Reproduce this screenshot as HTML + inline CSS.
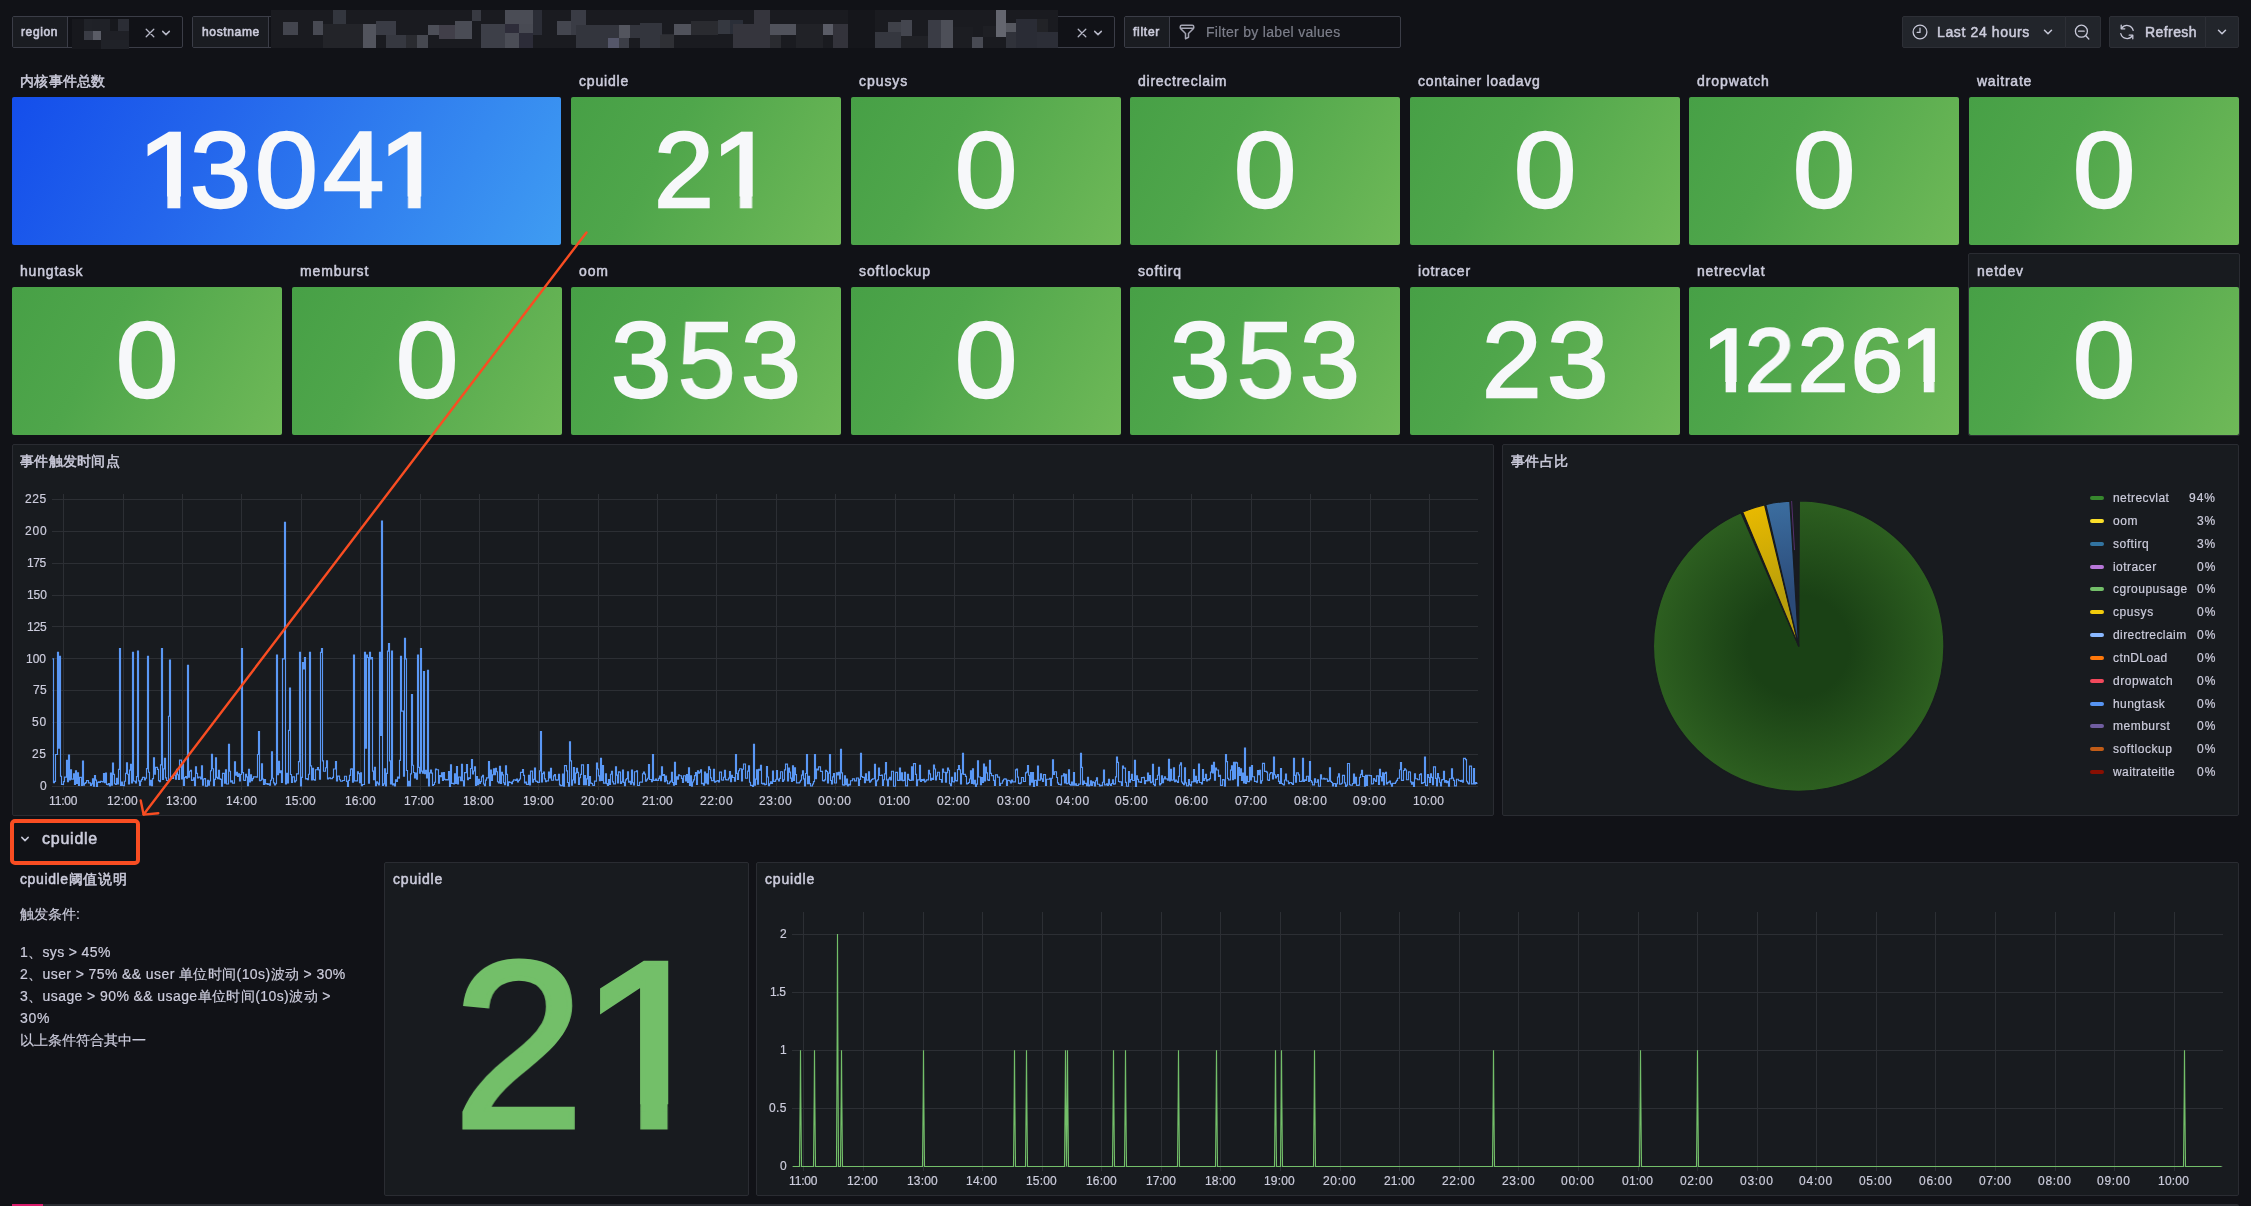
<!DOCTYPE html>
<html><head><meta charset="utf-8"><title>dashboard</title>
<style>
html,body{margin:0;padding:0;}
body{width:2251px;height:1206px;overflow:hidden;background:#111217;position:relative;font-family:"Liberation Sans",sans-serif;}
.t{position:absolute;white-space:nowrap;font-family:"Liberation Sans",sans-serif;will-change:transform;}
.a{position:absolute;}
</style></head><body>
<div style="position:absolute;left:12px;top:16px;width:171px;height:32px;box-sizing:border-box;border:1px solid #3b3d47;border-radius:2px;background:#111217;"></div>
<div style="position:absolute;left:13px;top:17px;width:54px;height:30px;background:#1a1c21;border-right:1px solid #3b3d47;border-radius:1px 0 0 1px;"></div>
<div class="t" style="font-size:12px;line-height:18px;top:22.80px;color:#ccccdc;letter-spacing:0.626px;left:21.00px;-webkit-text-stroke:0.6px #ccccdc;">region</div>
<div style="position:absolute;left:192px;top:16px;width:923px;height:32px;box-sizing:border-box;border:1px solid #3b3d47;border-radius:2px;background:#111217;"></div>
<div style="position:absolute;left:193px;top:17px;width:75px;height:30px;background:#1a1c21;border-right:1px solid #3b3d47;border-radius:1px 0 0 1px;"></div>
<div class="t" style="font-size:12px;line-height:18px;top:22.80px;color:#ccccdc;letter-spacing:0.649px;left:201.50px;-webkit-text-stroke:0.6px #ccccdc;">hostname</div>
<div style="position:absolute;left:1124px;top:16px;width:277px;height:32px;box-sizing:border-box;border:1px solid #3b3d47;border-radius:2px;background:#111217;"></div>
<div style="position:absolute;left:1125px;top:17px;width:44px;height:30px;background:#1a1c21;border-right:1px solid #3b3d47;border-radius:1px 0 0 1px;"></div>
<div class="t" style="font-size:12px;line-height:18px;top:22.80px;color:#ccccdc;letter-spacing:0.721px;left:1133.00px;-webkit-text-stroke:0.6px #ccccdc;">filter</div>
<svg class="a" style="left:144px;top:27px" width="12" height="12" viewBox="0 0 12 12"><path d="M2.2 2.2L9.8 9.8M9.8 2.2L2.2 9.8" stroke="#b6b7c6" stroke-width="1.3" fill="none" stroke-linecap="round"/></svg>
<svg class="a" style="left:160px;top:27.200000000000003px" width="12" height="12" viewBox="0 0 12 12"><path d="M2.7 4.35L6 7.65L9.3 4.35" stroke="#b6b7c6" stroke-width="1.5" fill="none" stroke-linecap="round" stroke-linejoin="round"/></svg>
<svg class="a" style="left:1076px;top:27px" width="12" height="12" viewBox="0 0 12 12"><path d="M2.2 2.2L9.8 9.8M9.8 2.2L2.2 9.8" stroke="#b6b7c6" stroke-width="1.3" fill="none" stroke-linecap="round"/></svg>
<svg class="a" style="left:1092px;top:27.200000000000003px" width="12" height="12" viewBox="0 0 12 12"><path d="M2.7 4.35L6 7.65L9.3 4.35" stroke="#b6b7c6" stroke-width="1.5" fill="none" stroke-linecap="round" stroke-linejoin="round"/></svg>
<div style="position:absolute;left:72px;top:19px;width:57px;height:30px;background:#17181d;"></div>
<div style="position:absolute;left:84px;top:19px;width:8px;height:12px;background:#202228;"></div>
<div style="position:absolute;left:92px;top:19px;width:18px;height:12px;background:#1f2127;"></div>
<div style="position:absolute;left:118px;top:19px;width:11px;height:13px;background:#2b2d35;"></div>
<div style="position:absolute;left:84px;top:31px;width:9px;height:9px;background:#3a3c45;"></div>
<div style="position:absolute;left:93px;top:31px;width:8px;height:9px;background:#5a5c66;"></div>
<div style="position:absolute;left:101px;top:31px;width:28px;height:9px;background:#1f2026;"></div>
<div style="position:absolute;left:101px;top:40px;width:28px;height:9px;background:#202228;"></div>
<div style="position:absolute;left:271px;top:10px;width:787px;height:38px;background:#1a1b20;"></div>
<div style="position:absolute;left:848px;top:10px;width:27px;height:38px;background:#15161b;"></div>
<div style="position:absolute;left:283px;top:22px;width:15px;height:13px;background:#43454e;"></div>
<div style="position:absolute;left:313px;top:21px;width:10px;height:14px;background:#484a53;"></div>
<div style="position:absolute;left:333px;top:10px;width:13px;height:14px;background:#33363e;"></div>
<div style="position:absolute;left:323px;top:24px;width:40px;height:24px;background:#232429;"></div>
<div style="position:absolute;left:363px;top:24px;width:13px;height:24px;background:#52545d;"></div>
<div style="position:absolute;left:376px;top:21px;width:20px;height:14px;background:#3a3c45;"></div>
<div style="position:absolute;left:386px;top:35px;width:20px;height:13px;background:#363840;"></div>
<div style="position:absolute;left:406px;top:35px;width:11px;height:13px;background:#2a2b30;"></div>
<div style="position:absolute;left:417px;top:35px;width:11px;height:13px;background:#464850;"></div>
<div style="position:absolute;left:428px;top:25px;width:11px;height:10px;background:#4d4f58;"></div>
<div style="position:absolute;left:439px;top:25px;width:16px;height:14px;background:#413f49;"></div>
<div style="position:absolute;left:455px;top:21px;width:17px;height:18px;background:#4a4c55;"></div>
<div style="position:absolute;left:472px;top:10px;width:9px;height:11px;background:#383a42;"></div>
<div style="position:absolute;left:481px;top:24px;width:24px;height:24px;background:#3d3f48;"></div>
<div style="position:absolute;left:505px;top:10px;width:28px;height:14px;background:#4a4c55;"></div>
<div style="position:absolute;left:505px;top:24px;width:14px;height:9px;background:#2e2d3a;"></div>
<div style="position:absolute;left:519px;top:24px;width:14px;height:9px;background:#484a53;"></div>
<div style="position:absolute;left:505px;top:33px;width:14px;height:15px;background:#4b4d56;"></div>
<div style="position:absolute;left:519px;top:33px;width:14px;height:15px;background:#2c2c38;"></div>
<div style="position:absolute;left:533px;top:10px;width:9px;height:25px;background:#2b2d36;"></div>
<div style="position:absolute;left:557px;top:21px;width:14px;height:14px;background:#44464f;"></div>
<div style="position:absolute;left:571px;top:10px;width:15px;height:25px;background:#3a3c45;"></div>
<div style="position:absolute;left:576px;top:25px;width:43px;height:23px;background:#33353d;"></div>
<div style="position:absolute;left:619px;top:25px;width:11px;height:13px;background:#53555e;"></div>
<div style="position:absolute;left:608px;top:38px;width:11px;height:10px;background:#55576a;"></div>
<div style="position:absolute;left:619px;top:38px;width:10px;height:10px;background:#3c3e47;"></div>
<div style="position:absolute;left:630px;top:25px;width:10px;height:13px;background:#33353d;"></div>
<div style="position:absolute;left:640px;top:23px;width:22px;height:25px;background:#33353d;"></div>
<div style="position:absolute;left:662px;top:34px;width:12px;height:14px;background:#2a2b30;"></div>
<div style="position:absolute;left:674px;top:24px;width:6px;height:11px;background:#4a4c55;"></div>
<div style="position:absolute;left:660px;top:35px;width:14px;height:13px;background:#2f3035;"></div>
<div style="position:absolute;left:674px;top:24px;width:17px;height:11px;background:#50525b;"></div>
<div style="position:absolute;left:691px;top:21px;width:27px;height:14px;background:#2a2b30;"></div>
<div style="position:absolute;left:718px;top:20px;width:12px;height:14px;background:#353840;"></div>
<div style="position:absolute;left:730px;top:20px;width:13px;height:14px;background:#2a2e38;"></div>
<div style="position:absolute;left:733px;top:24px;width:21px;height:24px;background:#35353d;"></div>
<div style="position:absolute;left:754px;top:10px;width:16px;height:38px;background:#35353d;"></div>
<div style="position:absolute;left:770px;top:24px;width:26px;height:11px;background:#50525b;"></div>
<div style="position:absolute;left:770px;top:35px;width:11px;height:13px;background:#2a2b30;"></div>
<div style="position:absolute;left:796px;top:24px;width:27px;height:24px;background:#212227;"></div>
<div style="position:absolute;left:823px;top:24px;width:10px;height:11px;background:#5a5c66;"></div>
<div style="position:absolute;left:833px;top:24px;width:15px;height:24px;background:#33333b;"></div>
<div style="position:absolute;left:875px;top:32px;width:26px;height:16px;background:#35373f;"></div>
<div style="position:absolute;left:888px;top:22px;width:13px;height:10px;background:#3f4149;"></div>
<div style="position:absolute;left:901px;top:20px;width:11px;height:16px;background:#44464f;"></div>
<div style="position:absolute;left:901px;top:36px;width:27px;height:12px;background:#202126;"></div>
<div style="position:absolute;left:928px;top:20px;width:13px;height:28px;background:#3a3c45;"></div>
<div style="position:absolute;left:941px;top:20px;width:12px;height:28px;background:#4d4f58;"></div>
<div style="position:absolute;left:953px;top:27px;width:20px;height:21px;background:#1c1d22;"></div>
<div style="position:absolute;left:972px;top:37px;width:11px;height:11px;background:#484a53;"></div>
<div style="position:absolute;left:983px;top:26px;width:13px;height:11px;background:#1e1f24;"></div>
<div style="position:absolute;left:996px;top:10px;width:10px;height:27px;background:#64666f;"></div>
<div style="position:absolute;left:1006px;top:23px;width:10px;height:9px;background:#55575f;"></div>
<div style="position:absolute;left:1006px;top:32px;width:10px;height:16px;background:#30323a;"></div>
<div style="position:absolute;left:1016px;top:19px;width:21px;height:29px;background:#2a2c35;"></div>
<div style="position:absolute;left:1037px;top:19px;width:11px;height:13px;background:#222327;"></div>
<div style="position:absolute;left:1037px;top:32px;width:21px;height:16px;background:#2c2e37;"></div>
<svg class="a" style="left:1177.9px;top:22.6px" width="18" height="18" viewBox="0 0 24 24"><path fill="#a3a4b2" d="M19,2H5A3,3,0,0,0,2,5V6.17a3,3,0,0,0,.25,1.2l0,.06a2.81,2.81,0,0,0,.59.86L9,14.41V21a1,1,0,0,0,.47.85A1,1,0,0,0,10,22a1,1,0,0,0,.45-.11l4-2A1,1,0,0,0,15,19V14.41l6.12-6.12a2.81,2.81,0,0,0,.59-.86l0-.06A3,3,0,0,0,22,6.17V5A3,3,0,0,0,19,2ZM13.290,13.290A1,1,0,0,0,13,14v4.380l-2,1V14a1,1,0,0,0-.29-.71L5.410,8H18.590ZM20,6H4V5A1,1,0,0,1,5,4H19a1,1,0,0,1,1,1Z"/></svg>
<div class="t" style="font-size:14px;line-height:21px;top:21.50px;color:#7d7f8b;letter-spacing:0.313px;left:1206.00px;-webkit-text-stroke:0.2px #7d7f8b;">Filter by label values</div>
<div style="position:absolute;left:1902px;top:16px;width:164px;height:32px;box-sizing:border-box;background:#22252b;border:1px solid #2d2f36;border-radius:2px 0 0 2px;"></div>
<div style="position:absolute;left:2065px;top:16px;width:36px;height:32px;box-sizing:border-box;background:#22252b;border:1px solid #2d2f36;border-radius:0 2px 2px 0;"></div>
<div style="position:absolute;left:2109px;top:16px;width:97px;height:32px;box-sizing:border-box;background:#22252b;border:1px solid #2d2f36;border-radius:2px 0 0 2px;"></div>
<div style="position:absolute;left:2205px;top:16px;width:34px;height:32px;box-sizing:border-box;background:#22252b;border:1px solid #2d2f36;border-radius:0 2px 2px 0;"></div>
<svg class="a" style="left:1911px;top:23px" width="18" height="18" viewBox="0 0 18 18"><circle cx="9" cy="9" r="6.9" stroke="#c7c8d8" stroke-width="1.3" fill="none"/><path d="M9 5.2V9.4H6.2" stroke="#c7c8d8" stroke-width="1.3" fill="none" stroke-linecap="round" stroke-linejoin="round"/></svg>
<div class="t" style="font-size:14px;line-height:21px;top:21.50px;color:#ccccdc;letter-spacing:0.628px;left:1936.50px;-webkit-text-stroke:0.5px #ccccdc;">Last 24 hours</div>
<svg class="a" style="left:2042px;top:26.200000000000003px" width="12" height="12" viewBox="0 0 12 12"><path d="M2.5 4.25L6 7.75L9.5 4.25" stroke="#c7c8d8" stroke-width="1.5" fill="none" stroke-linecap="round" stroke-linejoin="round"/></svg>
<svg class="a" style="left:2073px;top:23px" width="18" height="18" viewBox="0 0 18 18"><circle cx="8.4" cy="8.2" r="6" stroke="#c7c8d8" stroke-width="1.3" fill="none"/><path d="M5.6 8.2h5.6M12.8 12.8l3 3.2" stroke="#c7c8d8" stroke-width="1.3" fill="none" stroke-linecap="round"/></svg>
<svg class="a" style="left:2118px;top:23px" width="18" height="18" viewBox="0 0 18 18"><path d="M15.2 7.3A6.4 6.4 0 0 0 3.6 5.4M2.8 10.7a6.4 6.4 0 0 0 11.6 1.9" stroke="#c7c8d8" stroke-width="1.3" fill="none" stroke-linecap="round"/><path d="M3.2 2.2v3.6h3.6M14.8 15.8v-3.6h-3.6" stroke="#c7c8d8" stroke-width="1.3" fill="none" stroke-linecap="round" stroke-linejoin="round"/></svg>
<div class="t" style="font-size:14px;line-height:21px;top:21.50px;color:#ccccdc;letter-spacing:0.425px;left:2144.50px;-webkit-text-stroke:0.5px #ccccdc;">Refresh</div>
<svg class="a" style="left:2215.7px;top:26.200000000000003px" width="12" height="12" viewBox="0 0 12 12"><path d="M2.5 4.25L6 7.75L9.5 4.25" stroke="#c7c8d8" stroke-width="1.5" fill="none" stroke-linecap="round" stroke-linejoin="round"/></svg>
<div class="t" style="font-size:14px;line-height:21px;top:70.90px;color:#ccccdc;letter-spacing:0.280px;left:20.30px;-webkit-text-stroke:0.5px #ccccdc;">内核事件总数</div>
<div style="position:absolute;left:12px;top:97px;width:549px;height:148px;background:linear-gradient(120deg,#144eeb 0%,#2466ec 35%,#3f9cf2 100%);border-radius:2px;"></div>
<div class="t" style="left:136.99px;top:117.18px;font-size:107.05px;line-height:107.05px;width:59.54px;color:#f7f8fa;-webkit-text-stroke:2.4px #f7f8fa;transform:scaleX(1.1684);transform-origin:0 0;clip-path:polygon(-20px -20px,79.5px -20px,79.5px 79.45px,37.14px 79.45px,37.14px 93.82px,26.02px 93.82px,26.02px 79.45px,-20px 79.45px);">1</div>
<div class="t" style="left:189.65px;top:117.18px;font-size:107.05px;line-height:107.05px;width:59.54px;color:#f7f8fa;-webkit-text-stroke:2.4px #f7f8fa;transform:scaleX(1.0235);transform-origin:0 0;">3</div>
<div class="t" style="left:254.75px;top:117.18px;font-size:107.05px;line-height:107.05px;width:59.54px;color:#f7f8fa;-webkit-text-stroke:2.4px #f7f8fa;transform:scaleX(1.0542);transform-origin:0 0;">0</div>
<div class="t" style="left:323.43px;top:117.18px;font-size:107.05px;line-height:107.05px;width:59.54px;color:#f7f8fa;-webkit-text-stroke:2.4px #f7f8fa;transform:scaleX(1.0272);transform-origin:0 0;">4</div>
<div class="t" style="left:377.85px;top:117.18px;font-size:107.05px;line-height:107.05px;width:59.54px;color:#f7f8fa;-webkit-text-stroke:2.4px #f7f8fa;transform:scaleX(1.1508);transform-origin:0 0;clip-path:polygon(-20px -20px,79.5px -20px,79.5px 79.45px,37.14px 79.45px,37.14px 93.82px,26.02px 93.82px,26.02px 79.45px,-20px 79.45px);">1</div>
<div class="t" style="font-size:14px;line-height:21px;top:70.90px;color:#ccccdc;letter-spacing:0.815px;left:579.30px;-webkit-text-stroke:0.5px #ccccdc;">cpuidle</div>
<div style="position:absolute;left:571px;top:97px;width:270px;height:148px;background:linear-gradient(120deg,#47a046 0%,#4fa64b 35%,#6fb958 100%);border-radius:2px;"></div>
<div class="t" style="left:654.42px;top:117.18px;font-size:107.05px;line-height:107.05px;width:59.54px;color:#f7f8fa;-webkit-text-stroke:2.4px #f7f8fa;transform:scaleX(1.0057);transform-origin:0 0;">2</div>
<div class="t" style="left:710.74px;top:117.18px;font-size:107.05px;line-height:107.05px;width:59.54px;color:#f7f8fa;-webkit-text-stroke:2.4px #f7f8fa;transform:scaleX(1.1086);transform-origin:0 0;clip-path:polygon(-20px -20px,79.5px -20px,79.5px 79.45px,37.14px 79.45px,37.14px 93.82px,26.02px 93.82px,26.02px 79.45px,-20px 79.45px);">1</div>
<div class="t" style="font-size:14px;line-height:21px;top:70.90px;color:#ccccdc;letter-spacing:0.947px;left:859.30px;-webkit-text-stroke:0.5px #ccccdc;">cpusys</div>
<div style="position:absolute;left:851px;top:97px;width:270px;height:148px;background:linear-gradient(120deg,#47a046 0%,#4fa64b 35%,#6fb958 100%);border-radius:2px;"></div>
<div class="t" style="left:954.89px;top:117.18px;font-size:107.05px;line-height:107.05px;width:59.54px;color:#f7f8fa;-webkit-text-stroke:2.4px #f7f8fa;transform:scaleX(1.0430);transform-origin:0 0;">0</div>
<div class="t" style="font-size:14px;line-height:21px;top:70.90px;color:#ccccdc;letter-spacing:0.745px;left:1138.30px;-webkit-text-stroke:0.5px #ccccdc;">directreclaim</div>
<div style="position:absolute;left:1130px;top:97px;width:270px;height:148px;background:linear-gradient(120deg,#47a046 0%,#4fa64b 35%,#6fb958 100%);border-radius:2px;"></div>
<div class="t" style="left:1233.89px;top:117.18px;font-size:107.05px;line-height:107.05px;width:59.54px;color:#f7f8fa;-webkit-text-stroke:2.4px #f7f8fa;transform:scaleX(1.0430);transform-origin:0 0;">0</div>
<div class="t" style="font-size:14px;line-height:21px;top:70.90px;color:#ccccdc;letter-spacing:0.697px;left:1418.30px;-webkit-text-stroke:0.5px #ccccdc;">container loadavg</div>
<div style="position:absolute;left:1410px;top:97px;width:270px;height:148px;background:linear-gradient(120deg,#47a046 0%,#4fa64b 35%,#6fb958 100%);border-radius:2px;"></div>
<div class="t" style="left:1513.89px;top:117.18px;font-size:107.05px;line-height:107.05px;width:59.54px;color:#f7f8fa;-webkit-text-stroke:2.4px #f7f8fa;transform:scaleX(1.0430);transform-origin:0 0;">0</div>
<div class="t" style="font-size:14px;line-height:21px;top:70.90px;color:#ccccdc;letter-spacing:0.910px;left:1697.30px;-webkit-text-stroke:0.5px #ccccdc;">dropwatch</div>
<div style="position:absolute;left:1689px;top:97px;width:270px;height:148px;background:linear-gradient(120deg,#47a046 0%,#4fa64b 35%,#6fb958 100%);border-radius:2px;"></div>
<div class="t" style="left:1792.89px;top:117.18px;font-size:107.05px;line-height:107.05px;width:59.54px;color:#f7f8fa;-webkit-text-stroke:2.4px #f7f8fa;transform:scaleX(1.0430);transform-origin:0 0;">0</div>
<div class="t" style="font-size:14px;line-height:21px;top:70.90px;color:#ccccdc;letter-spacing:0.756px;left:1977.30px;-webkit-text-stroke:0.5px #ccccdc;">waitrate</div>
<div style="position:absolute;left:1969px;top:97px;width:270px;height:148px;background:linear-gradient(120deg,#47a046 0%,#4fa64b 35%,#6fb958 100%);border-radius:2px;"></div>
<div class="t" style="left:2072.89px;top:117.18px;font-size:107.05px;line-height:107.05px;width:59.54px;color:#f7f8fa;-webkit-text-stroke:2.4px #f7f8fa;transform:scaleX(1.0430);transform-origin:0 0;">0</div>
<div class="t" style="font-size:14px;line-height:21px;top:260.90px;color:#ccccdc;letter-spacing:0.814px;left:20.30px;-webkit-text-stroke:0.5px #ccccdc;">hungtask</div>
<div style="position:absolute;left:12px;top:287px;width:270px;height:148px;background:linear-gradient(120deg,#47a046 0%,#4fa64b 35%,#6fb958 100%);border-radius:2px;"></div>
<div class="t" style="left:115.89px;top:307.18px;font-size:107.05px;line-height:107.05px;width:59.54px;color:#f7f8fa;-webkit-text-stroke:2.4px #f7f8fa;transform:scaleX(1.0430);transform-origin:0 0;">0</div>
<div class="t" style="font-size:14px;line-height:21px;top:260.90px;color:#ccccdc;letter-spacing:0.876px;left:300.30px;-webkit-text-stroke:0.5px #ccccdc;">memburst</div>
<div style="position:absolute;left:292px;top:287px;width:270px;height:148px;background:linear-gradient(120deg,#47a046 0%,#4fa64b 35%,#6fb958 100%);border-radius:2px;"></div>
<div class="t" style="left:395.89px;top:307.18px;font-size:107.05px;line-height:107.05px;width:59.54px;color:#f7f8fa;-webkit-text-stroke:2.4px #f7f8fa;transform:scaleX(1.0430);transform-origin:0 0;">0</div>
<div class="t" style="font-size:14px;line-height:21px;top:260.90px;color:#ccccdc;letter-spacing:0.899px;left:579.30px;-webkit-text-stroke:0.5px #ccccdc;">oom</div>
<div style="position:absolute;left:571px;top:287px;width:270px;height:148px;background:linear-gradient(120deg,#47a046 0%,#4fa64b 35%,#6fb958 100%);border-radius:2px;"></div>
<div class="t" style="left:610.87px;top:307.18px;font-size:107.05px;line-height:107.05px;width:59.54px;color:#f7f8fa;-webkit-text-stroke:2.4px #f7f8fa;transform:scaleX(1.0141);transform-origin:0 0;">3</div>
<div class="t" style="left:678.24px;top:307.18px;font-size:107.05px;line-height:107.05px;width:59.54px;color:#f7f8fa;-webkit-text-stroke:2.4px #f7f8fa;transform:scaleX(0.9615);transform-origin:0 0;">5</div>
<div class="t" style="left:740.90px;top:307.18px;font-size:107.05px;line-height:107.05px;width:59.54px;color:#f7f8fa;-webkit-text-stroke:2.4px #f7f8fa;transform:scaleX(1.0047);transform-origin:0 0;">3</div>
<div class="t" style="font-size:14px;line-height:21px;top:260.90px;color:#ccccdc;letter-spacing:0.892px;left:859.30px;-webkit-text-stroke:0.5px #ccccdc;">softlockup</div>
<div style="position:absolute;left:851px;top:287px;width:270px;height:148px;background:linear-gradient(120deg,#47a046 0%,#4fa64b 35%,#6fb958 100%);border-radius:2px;"></div>
<div class="t" style="left:954.89px;top:307.18px;font-size:107.05px;line-height:107.05px;width:59.54px;color:#f7f8fa;-webkit-text-stroke:2.4px #f7f8fa;transform:scaleX(1.0430);transform-origin:0 0;">0</div>
<div class="t" style="font-size:14px;line-height:21px;top:260.90px;color:#ccccdc;letter-spacing:0.804px;left:1138.30px;-webkit-text-stroke:0.5px #ccccdc;">softirq</div>
<div style="position:absolute;left:1130px;top:287px;width:270px;height:148px;background:linear-gradient(120deg,#47a046 0%,#4fa64b 35%,#6fb958 100%);border-radius:2px;"></div>
<div class="t" style="left:1169.97px;top:307.18px;font-size:107.05px;line-height:107.05px;width:59.54px;color:#f7f8fa;-webkit-text-stroke:2.4px #f7f8fa;transform:scaleX(1.0141);transform-origin:0 0;">3</div>
<div class="t" style="left:1237.34px;top:307.18px;font-size:107.05px;line-height:107.05px;width:59.54px;color:#f7f8fa;-webkit-text-stroke:2.4px #f7f8fa;transform:scaleX(0.9615);transform-origin:0 0;">5</div>
<div class="t" style="left:1300.00px;top:307.18px;font-size:107.05px;line-height:107.05px;width:59.54px;color:#f7f8fa;-webkit-text-stroke:2.4px #f7f8fa;transform:scaleX(1.0047);transform-origin:0 0;">3</div>
<div class="t" style="font-size:14px;line-height:21px;top:260.90px;color:#ccccdc;letter-spacing:0.765px;left:1418.30px;-webkit-text-stroke:0.5px #ccccdc;">iotracer</div>
<div style="position:absolute;left:1410px;top:287px;width:270px;height:148px;background:linear-gradient(120deg,#47a046 0%,#4fa64b 35%,#6fb958 100%);border-radius:2px;"></div>
<div class="t" style="left:1481.86px;top:307.18px;font-size:107.05px;line-height:107.05px;width:59.54px;color:#f7f8fa;-webkit-text-stroke:2.4px #f7f8fa;transform:scaleX(0.9979);transform-origin:0 0;">2</div>
<div class="t" style="left:1546.82px;top:307.18px;font-size:107.05px;line-height:107.05px;width:59.54px;color:#f7f8fa;-webkit-text-stroke:2.4px #f7f8fa;transform:scaleX(1.0328);transform-origin:0 0;">3</div>
<div class="t" style="font-size:14px;line-height:21px;top:260.90px;color:#ccccdc;letter-spacing:0.758px;left:1697.30px;-webkit-text-stroke:0.5px #ccccdc;">netrecvlat</div>
<div style="position:absolute;left:1689px;top:287px;width:270px;height:148px;background:linear-gradient(120deg,#47a046 0%,#4fa64b 35%,#6fb958 100%);border-radius:2px;"></div>
<div class="t" style="left:1701.52px;top:315.95px;font-size:89.60px;line-height:89.60px;width:49.83px;color:#f7f8fa;-webkit-text-stroke:2.4px #f7f8fa;transform:scaleX(1.0921);transform-origin:0 0;clip-path:polygon(-20px -20px,69.8px -20px,69.8px 66.09px,31.22px 66.09px,31.22px 79.05px,21.64px 79.05px,21.64px 66.09px,-20px 66.09px);">1</div>
<div class="t" style="left:1744.96px;top:315.95px;font-size:89.60px;line-height:89.60px;width:49.83px;color:#f7f8fa;-webkit-text-stroke:2.4px #f7f8fa;transform:scaleX(0.9892);transform-origin:0 0;">2</div>
<div class="t" style="left:1798.30px;top:315.95px;font-size:89.60px;line-height:89.60px;width:49.83px;color:#f7f8fa;-webkit-text-stroke:2.4px #f7f8fa;transform:scaleX(1.0054);transform-origin:0 0;">2</div>
<div class="t" style="left:1851.18px;top:315.95px;font-size:89.60px;line-height:89.60px;width:49.83px;color:#f7f8fa;-webkit-text-stroke:2.4px #f7f8fa;transform:scaleX(1.0439);transform-origin:0 0;">6</div>
<div class="t" style="left:1900.06px;top:315.95px;font-size:89.60px;line-height:89.60px;width:49.83px;color:#f7f8fa;-webkit-text-stroke:2.4px #f7f8fa;transform:scaleX(1.1004);transform-origin:0 0;clip-path:polygon(-20px -20px,69.8px -20px,69.8px 66.09px,31.22px 66.09px,31.22px 79.05px,21.64px 79.05px,21.64px 66.09px,-20px 66.09px);">1</div>
<div style="position:absolute;left:1968px;top:253px;width:272px;height:183px;box-sizing:border-box;background:#181b1f;border:1px solid #2a2c32;border-radius:2px;"></div>
<div class="t" style="font-size:14px;line-height:21px;top:260.90px;color:#ccccdc;letter-spacing:0.802px;left:1977.30px;-webkit-text-stroke:0.5px #ccccdc;">netdev</div>
<div style="position:absolute;left:1969px;top:287px;width:270px;height:148px;background:linear-gradient(120deg,#47a046 0%,#4fa64b 35%,#6fb958 100%);border-radius:2px;"></div>
<div class="t" style="left:2072.89px;top:307.18px;font-size:107.05px;line-height:107.05px;width:59.54px;color:#f7f8fa;-webkit-text-stroke:2.4px #f7f8fa;transform:scaleX(1.0430);transform-origin:0 0;">0</div>
<div style="position:absolute;left:12px;top:444px;width:1482px;height:372px;box-sizing:border-box;background:#181b1f;border:1px solid #2a2c32;border-radius:2px;"></div>
<div class="t" style="font-size:14px;line-height:21px;top:451.00px;color:#ccccdc;letter-spacing:0.280px;left:20.00px;-webkit-text-stroke:0.5px #ccccdc;">事件触发时间点</div>
<svg class="a" style="left:0;top:0" width="2251" height="1206" viewBox="0 0 2251 1206"><path d="M63.5 494V790M123.5 494V790M182.5 494V790M241.5 494V790M301.5 494V790M360.5 494V790M420.5 494V790M479.5 494V790M538.5 494V790M598.5 494V790M657.5 494V790M716.5 494V790M776.5 494V790M835.5 494V790M895.5 494V790M954.5 494V790M1013.5 494V790M1073.5 494V790M1132.5 494V790M1191.5 494V790M1251.5 494V790M1310.5 494V790M1370.5 494V790M1429.5 494V790M52.2 786.5H1477.7M52.2 754.5H1477.7M52.2 722.5H1477.7M52.2 690.5H1477.7M52.2 658.5H1477.7M52.2 626.5H1477.7M52.2 595.5H1477.7M52.2 563.5H1477.7M52.2 531.5H1477.7M52.2 499.5H1477.7" stroke="#2c2f34" stroke-width="1" fill="none" shape-rendering="crispEdges"/><path d="M52.5 658.8V658.8H53.5V782.6H54.5V781.3H55.5V754.5H56.5V754.5H57.5V652.4H58.5V748.1H59.5V656.2H60.5V776.2H61.5V784.4H62.5V784.5H63.5V781.6H64.5V777.1H65.5V777.1H66.5V760.2H67.5V781.7H68.5V755.1H69.5V779.8H70.5V769.9H71.5V779.1H72.5V779.1H73.5V773.8H74.5V784.5H75.5V770.7H76.5V783.3H77.5V772.7H78.5V785.3H79.5V777.4H80.5V777.4H81.5V785.3H82.5V761.1H83.5V785.1H84.5V783.4H85.5V782.6H86.5V780.6H87.5V780.6H88.5V782.8H89.5V782.8H90.5V785.4H91.5V783.8H92.5V778.8H93.5V786.2H94.5V775.6H95.5V780.1H96.5V786.4H97.5V782.4H98.5V781.7H99.5V782.3H100.5V781.2H101.5V781.5H102.5V781.9H103.5V773.6H104.5V782.7H105.5V773.0H106.5V784.4H107.5V784.7H108.5V783.6H109.5V786.0H110.5V773.0H111.5V785.1H112.5V763.1H113.5V774.4H114.5V783.7H115.5V784.3H116.5V778.4H117.5V783.9H118.5V769.4H119.5V648.6H120.5V785.5H121.5V782.1H122.5V785.3H123.5V785.6H124.5V781.2H125.5V773.4H126.5V762.8H127.5V774.2H128.5V783.8H129.5V770.1H130.5V764.2H131.5V782.9H132.5V652.4H133.5V781.0H134.5V781.2H135.5V782.8H136.5V776.6H137.5V651.1H138.5V780.8H139.5V785.4H140.5V781.1H141.5V779.3H142.5V777.3H143.5V777.3H144.5V780.0H145.5V778.1H146.5V768.6H147.5V656.2H148.5V772.2H149.5V785.2H150.5V780.3H151.5V785.7H152.5V778.6H153.5V757.8H154.5V774.2H155.5V767.4H156.5V767.4H157.5V769.4H158.5V780.6H159.5V781.7H160.5V764.9H161.5V648.6H162.5V779.4H163.5V768.8H164.5V758.3H165.5V777.9H166.5V780.5H167.5V780.5H168.5V716.2H169.5V660.1H170.5V777.1H171.5V777.1H172.5V778.3H173.5V775.0H174.5V775.0H175.5V779.1H176.5V769.4H177.5V774.7H178.5V779.5H179.5V760.1H180.5V760.1H181.5V779.0H182.5V764.1H183.5V785.3H184.5V777.5H185.5V776.6H186.5V778.2H187.5V665.2H188.5V777.2H189.5V771.2H190.5V770.4H191.5V780.3H192.5V780.1H193.5V777.7H194.5V785.6H195.5V766.9H196.5V773.4H197.5V777.9H198.5V777.1H199.5V777.1H200.5V779.0H201.5V765.8H202.5V785.2H203.5V779.0H204.5V778.6H205.5V786.1H206.5V786.1H207.5V780.4H208.5V785.1H209.5V781.0H210.5V770.7H211.5V754.4H212.5V768.7H213.5V785.7H214.5V779.3H215.5V757.7H216.5V777.3H217.5V778.6H218.5V770.2H219.5V778.9H220.5V779.4H221.5V786.1H222.5V773.4H223.5V773.4H224.5V783.2H225.5V769.9H226.5V784.0H227.5V784.0H228.5V744.3H229.5V771.2H230.5V781.9H231.5V780.7H232.5V783.1H233.5V783.1H234.5V761.8H235.5V775.2H236.5V772.3H237.5V776.4H238.5V773.8H239.5V781.0H240.5V774.5H241.5V648.6H242.5V772.6H243.5V780.2H244.5V780.5H245.5V774.4H246.5V776.8H247.5V785.7H248.5V769.3H249.5V781.9H250.5V774.9H251.5V780.6H252.5V778.6H253.5V776.8H254.5V776.9H255.5V776.7H256.5V777.1H257.5V754.5H258.5V731.5H259.5V780.6H260.5V780.2H261.5V763.9H262.5V779.1H263.5V784.4H264.5V779.5H265.5V783.8H266.5V783.6H267.5V784.5H268.5V783.8H269.5V785.1H270.5V780.2H271.5V751.9H272.5V778.2H273.5V782.9H274.5V785.0H275.5V783.7H276.5V655.0H277.5V774.6H278.5V761.2H279.5V772.6H280.5V770.7H281.5V782.4H282.5V658.8H283.5V658.8H284.5V522.3H285.5V783.8H286.5V773.2H287.5V782.9H288.5V730.3H289.5V688.1H290.5V774.5H291.5V782.3H292.5V776.8H293.5V776.8H294.5V781.8H295.5V780.7H296.5V773.8H297.5V773.8H298.5V761.6H299.5V652.4H300.5V785.9H301.5V777.4H302.5V662.6H303.5V669.0H304.5V657.5H305.5V778.8H306.5V778.5H307.5V779.7H308.5V774.2H309.5V652.4H310.5V765.9H311.5V780.0H312.5V768.2H313.5V779.6H314.5V780.1H315.5V769.7H316.5V769.7H317.5V767.6H318.5V769.8H319.5V779.1H320.5V652.4H321.5V648.6H322.5V760.9H323.5V771.2H324.5V771.2H325.5V767.7H326.5V760.7H327.5V779.0H328.5V778.1H329.5V777.8H330.5V778.6H331.5V778.6H332.5V777.3H333.5V769.0H334.5V769.0H335.5V761.6H336.5V780.9H337.5V776.1H338.5V776.1H339.5V779.7H340.5V781.2H341.5V781.2H342.5V780.5H343.5V780.5H344.5V776.2H345.5V776.2H346.5V781.4H347.5V786.4H348.5V780.4H349.5V775.4H350.5V769.1H351.5V768.8H352.5V782.2H353.5V655.0H354.5V781.0H355.5V780.9H356.5V780.9H357.5V771.9H358.5V773.6H359.5V782.6H360.5V772.8H361.5V785.7H362.5V784.5H363.5V784.5H364.5V652.4H365.5V748.1H366.5V655.0H367.5V657.5H368.5V783.2H369.5V652.4H370.5V658.8H371.5V657.5H372.5V771.1H373.5V779.6H374.5V767.3H375.5V785.6H376.5V781.9H377.5V783.1H378.5V784.9H379.5V652.4H380.5V735.4H381.5V521.0H382.5V785.5H383.5V783.8H384.5V768.7H385.5V785.8H386.5V773.3H387.5V651.1H388.5V643.5H389.5V760.9H390.5V783.9H391.5V651.1H392.5V785.0H393.5V783.9H394.5V786.0H395.5V779.8H396.5V781.5H397.5V777.1H398.5V778.1H399.5V760.4H400.5V656.2H401.5V711.1H402.5V711.1H403.5V776.2H404.5V638.4H405.5V658.8H406.5V770.5H407.5V786.0H408.5V781.4H409.5V785.9H410.5V773.8H411.5V694.5H412.5V765.2H413.5V772.5H414.5V777.8H415.5V773.0H416.5V779.1H417.5V655.0H418.5V767.3H419.5V773.2H420.5V648.6H421.5V771.1H422.5V773.2H423.5V671.6H424.5V773.6H425.5V770.4H426.5V778.0H427.5V670.3H428.5V785.9H429.5V772.9H430.5V770.1H431.5V773.1H432.5V785.4H433.5V784.5H434.5V782.2H435.5V769.1H436.5V769.7H437.5V769.7H438.5V783.2H439.5V775.6H440.5V776.7H441.5V772.7H442.5V780.3H443.5V772.5H444.5V779.3H445.5V780.0H446.5V779.5H447.5V779.8H448.5V771.6H449.5V786.3H450.5V764.8H451.5V783.3H452.5V783.3H453.5V783.9H454.5V773.8H455.5V783.5H456.5V766.6H457.5V783.9H458.5V777.0H459.5V777.0H460.5V780.7H461.5V764.3H462.5V780.7H463.5V786.0H464.5V772.6H465.5V772.6H466.5V764.6H467.5V779.7H468.5V777.9H469.5V778.4H470.5V768.5H471.5V759.6H472.5V774.0H473.5V771.0H474.5V766.7H475.5V785.3H476.5V776.6H477.5V784.7H478.5V779.4H479.5V783.4H480.5V781.6H481.5V776.8H482.5V775.3H483.5V784.0H484.5V785.7H485.5V780.1H486.5V777.9H487.5V777.9H488.5V761.6H489.5V785.7H490.5V770.1H491.5V780.4H492.5V774.7H493.5V768.9H494.5V774.6H495.5V768.4H496.5V771.7H497.5V781.7H498.5V782.9H499.5V766.2H500.5V783.5H501.5V772.2H502.5V774.8H503.5V782.7H504.5V784.6H505.5V765.7H506.5V774.4H507.5V785.6H508.5V781.8H509.5V782.4H510.5V782.4H511.5V783.6H512.5V781.2H513.5V779.9H514.5V779.9H515.5V780.4H516.5V779.0H517.5V781.8H518.5V780.3H519.5V779.0H520.5V772.3H521.5V772.3H522.5V769.6H523.5V775.3H524.5V783.0H525.5V782.1H526.5V784.4H527.5V784.4H528.5V775.4H529.5V785.0H530.5V771.1H531.5V771.1H532.5V782.2H533.5V779.3H534.5V768.1H535.5V781.1H536.5V781.3H537.5V782.4H538.5V782.3H539.5V770.8H540.5V731.5H541.5V782.0H542.5V773.6H543.5V772.0H544.5V778.9H545.5V781.7H546.5V780.7H547.5V780.8H548.5V772.0H549.5V777.9H550.5V768.2H551.5V780.2H552.5V780.2H553.5V775.8H554.5V774.6H555.5V779.8H556.5V780.1H557.5V779.8H558.5V774.4H559.5V784.8H560.5V785.6H561.5V785.6H562.5V774.0H563.5V786.1H564.5V765.6H565.5V765.6H566.5V770.8H567.5V782.5H568.5V786.2H569.5V741.7H570.5V760.9H571.5V785.2H572.5V780.0H573.5V767.5H574.5V782.9H575.5V773.1H576.5V768.3H577.5V772.4H578.5V784.5H579.5V777.7H580.5V774.3H581.5V764.8H582.5V764.8H583.5V784.6H584.5V775.6H585.5V784.6H586.5V778.8H587.5V764.6H588.5V785.4H589.5V776.6H590.5V783.1H591.5V783.5H592.5V785.2H593.5V785.5H594.5V781.1H595.5V781.1H596.5V763.1H597.5V769.0H598.5V775.8H599.5V780.7H600.5V758.3H601.5V780.3H602.5V765.5H603.5V783.1H604.5V783.1H605.5V773.7H606.5V783.6H607.5V785.5H608.5V779.6H609.5V784.5H610.5V774.2H611.5V771.3H612.5V781.8H613.5V784.0H614.5V783.8H615.5V766.8H616.5V775.1H617.5V783.0H618.5V771.8H619.5V772.1H620.5V783.5H621.5V781.8H622.5V770.0H623.5V782.3H624.5V785.7H625.5V779.9H626.5V778.6H627.5V771.9H628.5V782.2H629.5V781.4H630.5V784.2H631.5V770.1H632.5V782.7H633.5V784.9H634.5V771.7H635.5V771.7H636.5V770.7H637.5V785.5H638.5V785.5H639.5V782.2H640.5V782.1H641.5V782.1H642.5V773.7H643.5V772.1H644.5V774.1H645.5V781.2H646.5V779.8H647.5V778.2H648.5V764.5H649.5V779.5H650.5V779.5H651.5V781.7H652.5V754.5H653.5V780.3H654.5V780.3H655.5V779.1H656.5V780.4H657.5V780.4H658.5V778.3H659.5V776.1H660.5V780.6H661.5V766.7H662.5V775.4H663.5V774.5H664.5V781.7H665.5V776.0H666.5V780.7H667.5V783.7H668.5V783.7H669.5V782.1H670.5V781.1H671.5V772.3H672.5V782.5H673.5V785.2H674.5V762.2H675.5V784.3H676.5V776.9H677.5V779.1H678.5V774.7H679.5V775.7H680.5V775.7H681.5V778.4H682.5V782.3H683.5V775.7H684.5V775.7H685.5V780.9H686.5V774.6H687.5V782.3H688.5V767.9H689.5V785.4H690.5V775.7H691.5V786.1H692.5V782.0H693.5V779.9H694.5V775.6H695.5V772.6H696.5V784.5H697.5V770.9H698.5V773.2H699.5V772.1H700.5V769.8H701.5V783.7H702.5V783.3H703.5V785.2H704.5V772.1H705.5V783.0H706.5V773.7H707.5V783.8H708.5V766.9H709.5V769.3H710.5V777.8H711.5V780.6H712.5V780.6H713.5V769.2H714.5V782.2H715.5V781.3H716.5V781.0H717.5V780.5H718.5V782.0H719.5V772.1H720.5V772.1H721.5V780.0H722.5V780.1H723.5V777.2H724.5V770.4H725.5V779.6H726.5V779.8H727.5V779.9H728.5V778.1H729.5V771.6H730.5V781.6H731.5V775.4H732.5V777.5H733.5V777.5H734.5V781.1H735.5V754.5H736.5V773.4H737.5V779.5H738.5V770.7H739.5V768.7H740.5V768.7H741.5V781.0H742.5V769.2H743.5V764.0H744.5V764.0H745.5V778.2H746.5V778.2H747.5V771.1H748.5V765.9H749.5V782.2H750.5V785.3H751.5V785.3H752.5V786.3H753.5V744.3H754.5V785.1H755.5V779.1H756.5V769.8H757.5V784.1H758.5V769.3H759.5V770.2H760.5V765.2H761.5V783.4H762.5V784.0H763.5V783.4H764.5V784.7H765.5V784.3H766.5V766.5H767.5V777.0H768.5V785.7H769.5V783.7H770.5V781.9H771.5V783.4H772.5V771.1H773.5V781.4H774.5V781.5H775.5V779.7H776.5V770.5H777.5V779.2H778.5V781.0H779.5V778.4H780.5V771.7H781.5V771.7H782.5V781.4H783.5V779.8H784.5V769.9H785.5V764.1H786.5V764.1H787.5V781.0H788.5V768.1H789.5V772.1H790.5V778.1H791.5V781.3H792.5V765.9H793.5V780.3H794.5V767.7H795.5V774.6H796.5V783.0H797.5V782.8H798.5V782.8H799.5V782.0H800.5V780.2H801.5V775.1H802.5V770.8H803.5V778.8H804.5V786.0H805.5V773.5H806.5V754.5H807.5V783.6H808.5V776.4H809.5V783.6H810.5V786.0H811.5V786.0H812.5V784.0H813.5V781.6H814.5V754.5H815.5V778.6H816.5V769.1H817.5V770.0H818.5V766.9H819.5V766.9H820.5V771.4H821.5V771.4H822.5V780.6H823.5V781.0H824.5V779.8H825.5V770.4H826.5V771.5H827.5V783.0H828.5V773.1H829.5V754.5H830.5V780.5H831.5V783.9H832.5V776.8H833.5V773.6H834.5V783.0H835.5V783.0H836.5V772.9H837.5V775.0H838.5V772.3H839.5V778.9H840.5V749.4H841.5V772.8H842.5V784.8H843.5V785.1H844.5V775.7H845.5V784.6H846.5V779.1H847.5V785.8H848.5V784.3H849.5V784.8H850.5V780.7H851.5V780.7H852.5V778.8H853.5V778.8H854.5V780.8H855.5V780.8H856.5V778.0H857.5V778.0H858.5V785.3H859.5V779.4H860.5V753.2H861.5V776.5H862.5V777.3H863.5V777.3H864.5V782.7H865.5V773.7H866.5V780.1H867.5V780.1H868.5V771.7H869.5V782.1H870.5V780.9H871.5V779.5H872.5V778.9H873.5V778.7H874.5V764.2H875.5V785.6H876.5V780.9H877.5V779.7H878.5V768.0H879.5V775.5H880.5V775.5H881.5V775.0H882.5V785.5H883.5V779.7H884.5V773.8H885.5V762.6H886.5V779.9H887.5V785.9H888.5V779.1H889.5V777.3H890.5V779.9H891.5V771.2H892.5V771.2H893.5V786.2H894.5V786.2H895.5V772.4H896.5V772.4H897.5V780.3H898.5V780.4H899.5V768.0H900.5V780.2H901.5V772.9H902.5V780.6H903.5V780.3H904.5V772.2H905.5V785.9H906.5V785.9H907.5V774.2H908.5V779.3H909.5V780.4H910.5V780.4H911.5V766.7H912.5V780.2H913.5V763.6H914.5V763.6H915.5V774.3H916.5V785.6H917.5V779.9H918.5V779.9H919.5V765.2H920.5V781.3H921.5V779.6H922.5V780.3H923.5V779.4H924.5V781.9H925.5V781.0H926.5V779.9H927.5V779.9H928.5V770.4H929.5V773.9H930.5V780.1H931.5V778.4H932.5V779.4H933.5V765.1H934.5V769.0H935.5V779.8H936.5V776.0H937.5V772.2H938.5V772.2H939.5V779.5H940.5V779.5H941.5V782.1H942.5V769.0H943.5V772.2H944.5V772.2H945.5V782.2H946.5V772.6H947.5V768.0H948.5V770.2H949.5V783.7H950.5V785.7H951.5V777.4H952.5V781.7H953.5V781.8H954.5V772.8H955.5V780.6H956.5V781.0H957.5V769.5H958.5V765.6H959.5V769.7H960.5V783.8H961.5V773.9H962.5V753.2H963.5V774.3H964.5V774.3H965.5V776.3H966.5V783.8H967.5V783.4H968.5V782.5H969.5V779.0H970.5V770.7H971.5V783.5H972.5V768.9H973.5V783.9H974.5V780.2H975.5V786.3H976.5V784.1H977.5V760.9H978.5V777.0H979.5V777.0H980.5V784.7H981.5V777.6H982.5V782.3H983.5V764.1H984.5V780.9H985.5V767.1H986.5V772.9H987.5V779.9H988.5V780.3H989.5V760.3H990.5V773.4H991.5V775.6H992.5V775.6H993.5V780.3H994.5V785.5H995.5V774.9H996.5V774.9H997.5V777.1H998.5V777.1H999.5V785.3H1000.5V783.2H1001.5V783.2H1002.5V780.9H1003.5V779.2H1004.5V778.7H1005.5V779.1H1006.5V785.4H1007.5V780.3H1008.5V780.5H1009.5V781.0H1010.5V783.0H1011.5V780.1H1012.5V781.8H1013.5V781.8H1014.5V781.9H1015.5V769.9H1016.5V769.1H1017.5V777.1H1018.5V783.4H1019.5V783.7H1020.5V782.9H1021.5V777.5H1022.5V777.5H1023.5V781.5H1024.5V781.5H1025.5V772.8H1026.5V772.1H1027.5V765.6H1028.5V775.2H1029.5V785.0H1030.5V772.5H1031.5V782.1H1032.5V772.6H1033.5V786.3H1034.5V780.2H1035.5V780.3H1036.5V785.3H1037.5V766.1H1038.5V780.1H1039.5V780.1H1040.5V773.9H1041.5V778.8H1042.5V781.4H1043.5V774.6H1044.5V774.6H1045.5V785.5H1046.5V779.2H1047.5V779.2H1048.5V779.2H1049.5V778.2H1050.5V785.3H1051.5V778.2H1052.5V759.9H1053.5V774.3H1054.5V771.7H1055.5V771.7H1056.5V777.5H1057.5V782.8H1058.5V784.3H1059.5V784.3H1060.5V784.9H1061.5V775.9H1062.5V775.9H1063.5V773.8H1064.5V782.9H1065.5V774.4H1066.5V783.6H1067.5V783.2H1068.5V769.9H1069.5V784.5H1070.5V785.1H1071.5V782.1H1072.5V785.1H1073.5V772.6H1074.5V785.1H1075.5V783.8H1076.5V785.5H1077.5V785.5H1078.5V784.1H1079.5V784.1H1080.5V753.2H1081.5V767.4H1082.5V784.6H1083.5V781.0H1084.5V783.4H1085.5V783.4H1086.5V785.6H1087.5V777.2H1088.5V785.8H1089.5V785.1H1090.5V780.7H1091.5V785.5H1092.5V781.8H1093.5V782.6H1094.5V785.9H1095.5V780.7H1096.5V777.9H1097.5V784.2H1098.5V784.2H1099.5V785.8H1100.5V785.3H1101.5V785.7H1102.5V782.2H1103.5V770.1H1104.5V784.8H1105.5V784.8H1106.5V783.7H1107.5V785.5H1108.5V779.3H1109.5V784.2H1110.5V785.5H1111.5V783.5H1112.5V779.8H1113.5V784.1H1114.5V783.8H1115.5V776.8H1116.5V757.1H1117.5V762.4H1118.5V781.5H1119.5V781.8H1120.5V781.7H1121.5V785.4H1122.5V766.1H1123.5V768.1H1124.5V768.1H1125.5V782.4H1126.5V786.2H1127.5V786.2H1128.5V771.6H1129.5V782.1H1130.5V779.5H1131.5V774.2H1132.5V780.5H1133.5V780.5H1134.5V760.2H1135.5V786.4H1136.5V775.7H1137.5V779.3H1138.5V781.8H1139.5V781.7H1140.5V782.5H1141.5V777.6H1142.5V777.6H1143.5V777.3H1144.5V783.7H1145.5V780.6H1146.5V780.8H1147.5V773.1H1148.5V780.6H1149.5V775.6H1150.5V782.6H1151.5V782.0H1152.5V764.4H1153.5V784.3H1154.5V785.7H1155.5V779.3H1156.5V779.3H1157.5V775.2H1158.5V767.3H1159.5V784.9H1160.5V783.6H1161.5V775.9H1162.5V782.7H1163.5V778.8H1164.5V776.8H1165.5V779.0H1166.5V778.8H1167.5V780.2H1168.5V759.2H1169.5V780.8H1170.5V769.2H1171.5V780.2H1172.5V780.0H1173.5V767.8H1174.5V781.7H1175.5V780.1H1176.5V781.2H1177.5V782.5H1178.5V776.4H1179.5V765.0H1180.5V762.8H1181.5V782.0H1182.5V783.3H1183.5V784.6H1184.5V767.9H1185.5V782.9H1186.5V785.9H1187.5V785.9H1188.5V779.6H1189.5V784.6H1190.5V786.0H1191.5V781.9H1192.5V781.9H1193.5V769.5H1194.5V781.7H1195.5V776.4H1196.5V782.8H1197.5V780.5H1198.5V764.1H1199.5V782.5H1200.5V782.5H1201.5V783.8H1202.5V769.5H1203.5V780.3H1204.5V778.6H1205.5V774.4H1206.5V780.9H1207.5V779.5H1208.5V779.8H1209.5V778.6H1210.5V772.1H1211.5V765.2H1212.5V773.0H1213.5V762.4H1214.5V780.1H1215.5V768.0H1216.5V770.0H1217.5V770.0H1218.5V776.4H1219.5V775.4H1220.5V785.4H1221.5V785.4H1222.5V779.5H1223.5V779.9H1224.5V786.2H1225.5V754.5H1226.5V761.6H1227.5V778.3H1228.5V779.8H1229.5V779.8H1230.5V770.1H1231.5V765.8H1232.5V779.6H1233.5V762.4H1234.5V778.6H1235.5V762.3H1236.5V762.9H1237.5V786.0H1238.5V767.5H1239.5V775.4H1240.5V768.8H1241.5V780.4H1242.5V773.1H1243.5V782.8H1244.5V748.1H1245.5V783.3H1246.5V776.3H1247.5V781.6H1248.5V781.6H1249.5V767.3H1250.5V779.8H1251.5V765.6H1252.5V776.7H1253.5V776.7H1254.5V781.5H1255.5V781.4H1256.5V782.1H1257.5V770.6H1258.5V774.6H1259.5V770.4H1260.5V783.2H1261.5V780.7H1262.5V763.4H1263.5V763.4H1264.5V771.3H1265.5V771.3H1266.5V772.1H1267.5V780.0H1268.5V780.4H1269.5V774.0H1270.5V772.6H1271.5V772.7H1272.5V778.8H1273.5V757.1H1274.5V774.7H1275.5V778.0H1276.5V776.4H1277.5V774.5H1278.5V781.3H1279.5V783.4H1280.5V768.6H1281.5V783.5H1282.5V784.2H1283.5V784.8H1284.5V780.0H1285.5V774.1H1286.5V781.0H1287.5V781.0H1288.5V783.6H1289.5V782.5H1290.5V782.5H1291.5V783.4H1292.5V784.5H1293.5V758.3H1294.5V775.4H1295.5V782.1H1296.5V772.9H1297.5V772.9H1298.5V774.8H1299.5V781.5H1300.5V781.5H1301.5V781.1H1302.5V758.3H1303.5V781.4H1304.5V779.9H1305.5V780.4H1306.5V776.2H1307.5V776.2H1308.5V781.3H1309.5V761.5H1310.5V780.5H1311.5V782.1H1312.5V785.0H1313.5V784.8H1314.5V778.9H1315.5V782.2H1316.5V782.2H1317.5V779.7H1318.5V786.2H1319.5V786.2H1320.5V774.9H1321.5V779.0H1322.5V779.0H1323.5V778.3H1324.5V779.2H1325.5V778.9H1326.5V779.0H1327.5V781.5H1328.5V780.9H1329.5V767.8H1330.5V781.3H1331.5V782.5H1332.5V786.0H1333.5V783.6H1334.5V783.6H1335.5V786.4H1336.5V783.7H1337.5V777.0H1338.5V773.8H1339.5V784.1H1340.5V784.0H1341.5V783.2H1342.5V775.4H1343.5V775.2H1344.5V782.9H1345.5V786.3H1346.5V785.1H1347.5V763.5H1348.5V763.5H1349.5V784.7H1350.5V785.2H1351.5V785.2H1352.5V783.5H1353.5V774.0H1354.5V783.2H1355.5V777.2H1356.5V785.4H1357.5V785.4H1358.5V785.1H1359.5V777.4H1360.5V774.4H1361.5V770.2H1362.5V776.5H1363.5V776.5H1364.5V786.2H1365.5V775.2H1366.5V785.3H1367.5V775.2H1368.5V775.2H1369.5V775.6H1370.5V775.6H1371.5V783.8H1372.5V783.7H1373.5V778.6H1374.5V780.1H1375.5V781.5H1376.5V775.8H1377.5V775.8H1378.5V784.3H1379.5V769.3H1380.5V776.6H1381.5V780.9H1382.5V772.8H1383.5V785.0H1384.5V773.4H1385.5V772.4H1386.5V783.8H1387.5V782.6H1388.5V782.1H1389.5V781.0H1390.5V783.8H1391.5V786.1H1392.5V783.3H1393.5V783.3H1394.5V783.5H1395.5V782.0H1396.5V780.3H1397.5V778.2H1398.5V778.2H1399.5V769.7H1400.5V762.5H1401.5V780.3H1402.5V780.3H1403.5V770.5H1404.5V768.7H1405.5V770.0H1406.5V779.7H1407.5V779.7H1408.5V771.7H1409.5V772.0H1410.5V781.9H1411.5V784.2H1412.5V782.4H1413.5V786.3H1414.5V773.9H1415.5V778.7H1416.5V778.7H1417.5V779.7H1418.5V779.7H1419.5V774.6H1420.5V773.8H1421.5V783.5H1422.5V782.9H1423.5V782.5H1424.5V757.1H1425.5V785.3H1426.5V785.7H1427.5V774.6H1428.5V777.5H1429.5V782.3H1430.5V773.8H1431.5V777.3H1432.5V784.7H1433.5V766.9H1434.5V766.9H1435.5V778.4H1436.5V785.8H1437.5V773.6H1438.5V777.9H1439.5V782.2H1440.5V786.0H1441.5V779.9H1442.5V779.5H1443.5V771.4H1444.5V782.1H1445.5V780.5H1446.5V782.7H1447.5V781.4H1448.5V786.1H1449.5V778.7H1450.5V778.7H1451.5V768.7H1452.5V778.1H1453.5V780.4H1454.5V785.9H1455.5V785.9H1456.5V779.2H1457.5V779.2H1458.5V780.6H1459.5V780.6H1460.5V781.3H1461.5V780.3H1462.5V782.1H1463.5V758.3H1464.5V758.3H1465.5V759.6H1466.5V781.2H1467.5V783.0H1468.5V783.9H1469.5V766.1H1470.5V766.1H1471.5V783.9H1472.5V784.0H1473.5V768.5H1474.5V783.8H1475.5V782.6H1476.5V783.4H1477.5" stroke="#5a98f5" stroke-width="1.15" fill="none" stroke-linejoin="miter"/></svg>
<div class="t" style="font-size:12px;line-height:18px;top:777.10px;color:#ccccdc;letter-spacing:0.896px;left:39.73px;-webkit-text-stroke:0.2px #ccccdc;">0</div>
<div class="t" style="font-size:12px;line-height:18px;top:745.20px;color:#ccccdc;letter-spacing:0.632px;left:32.42px;-webkit-text-stroke:0.2px #ccccdc;">25</div>
<div class="t" style="font-size:12px;line-height:18px;top:713.30px;color:#ccccdc;letter-spacing:0.758px;left:32.29px;-webkit-text-stroke:0.2px #ccccdc;">50</div>
<div class="t" style="font-size:12px;line-height:18px;top:681.40px;color:#ccccdc;letter-spacing:0.310px;left:32.74px;-webkit-text-stroke:0.2px #ccccdc;">75</div>
<div class="t" style="font-size:12px;line-height:18px;top:649.50px;color:#ccccdc;letter-spacing:-0.000px;left:26.38px;-webkit-text-stroke:0.2px #ccccdc;">100</div>
<div class="t" style="font-size:12px;line-height:18px;top:617.60px;color:#ccccdc;letter-spacing:-0.176px;left:26.73px;-webkit-text-stroke:0.2px #ccccdc;">125</div>
<div class="t" style="font-size:12px;line-height:18px;top:585.70px;color:#ccccdc;letter-spacing:-0.092px;left:26.56px;-webkit-text-stroke:0.2px #ccccdc;">150</div>
<div class="t" style="font-size:12px;line-height:18px;top:553.80px;color:#ccccdc;letter-spacing:-0.391px;left:27.16px;-webkit-text-stroke:0.2px #ccccdc;">175</div>
<div class="t" style="font-size:12px;line-height:18px;top:521.90px;color:#ccccdc;letter-spacing:0.812px;left:24.75px;-webkit-text-stroke:0.2px #ccccdc;">200</div>
<div class="t" style="font-size:12px;line-height:18px;top:490.00px;color:#ccccdc;letter-spacing:0.636px;left:25.11px;-webkit-text-stroke:0.2px #ccccdc;">225</div>
<div class="t" style="font-size:12px;line-height:18px;top:791.80px;color:#ccccdc;letter-spacing:-0.156px;left:48.84px;-webkit-text-stroke:0.2px #ccccdc;">11:00</div>
<div class="t" style="font-size:12px;line-height:18px;top:791.80px;color:#ccccdc;letter-spacing:0.153px;left:107.15px;-webkit-text-stroke:0.2px #ccccdc;">12:00</div>
<div class="t" style="font-size:12px;line-height:18px;top:791.80px;color:#ccccdc;letter-spacing:0.172px;left:166.49px;-webkit-text-stroke:0.2px #ccccdc;">13:00</div>
<div class="t" style="font-size:12px;line-height:18px;top:791.80px;color:#ccccdc;letter-spacing:0.240px;left:225.73px;-webkit-text-stroke:0.2px #ccccdc;">14:00</div>
<div class="t" style="font-size:12px;line-height:18px;top:791.80px;color:#ccccdc;letter-spacing:0.149px;left:285.29px;-webkit-text-stroke:0.2px #ccccdc;">15:00</div>
<div class="t" style="font-size:12px;line-height:18px;top:791.80px;color:#ccccdc;letter-spacing:0.178px;left:344.60px;-webkit-text-stroke:0.2px #ccccdc;">16:00</div>
<div class="t" style="font-size:12px;line-height:18px;top:791.80px;color:#ccccdc;letter-spacing:-0.033px;left:404.40px;-webkit-text-stroke:0.2px #ccccdc;">17:00</div>
<div class="t" style="font-size:12px;line-height:18px;top:791.80px;color:#ccccdc;letter-spacing:0.175px;left:463.36px;-webkit-text-stroke:0.2px #ccccdc;">18:00</div>
<div class="t" style="font-size:12px;line-height:18px;top:791.80px;color:#ccccdc;letter-spacing:0.178px;left:522.73px;-webkit-text-stroke:0.2px #ccccdc;">19:00</div>
<div class="t" style="font-size:12px;line-height:18px;top:791.80px;color:#ccccdc;letter-spacing:0.691px;left:581.08px;-webkit-text-stroke:0.2px #ccccdc;">20:00</div>
<div class="t" style="font-size:12px;line-height:18px;top:791.80px;color:#ccccdc;letter-spacing:0.153px;left:641.53px;-webkit-text-stroke:0.2px #ccccdc;">21:00</div>
<div class="t" style="font-size:12px;line-height:18px;top:791.80px;color:#ccccdc;letter-spacing:0.641px;left:699.93px;-webkit-text-stroke:0.2px #ccccdc;">22:00</div>
<div class="t" style="font-size:12px;line-height:18px;top:791.80px;color:#ccccdc;letter-spacing:0.660px;left:759.27px;-webkit-text-stroke:0.2px #ccccdc;">23:00</div>
<div class="t" style="font-size:12px;line-height:18px;top:791.80px;color:#ccccdc;letter-spacing:0.742px;left:818.48px;-webkit-text-stroke:0.2px #ccccdc;">00:00</div>
<div class="t" style="font-size:12px;line-height:18px;top:791.80px;color:#ccccdc;letter-spacing:0.204px;left:878.93px;-webkit-text-stroke:0.2px #ccccdc;">01:00</div>
<div class="t" style="font-size:12px;line-height:18px;top:791.80px;color:#ccccdc;letter-spacing:0.691px;left:937.33px;-webkit-text-stroke:0.2px #ccccdc;">02:00</div>
<div class="t" style="font-size:12px;line-height:18px;top:791.80px;color:#ccccdc;letter-spacing:0.710px;left:996.66px;-webkit-text-stroke:0.2px #ccccdc;">03:00</div>
<div class="t" style="font-size:12px;line-height:18px;top:791.80px;color:#ccccdc;letter-spacing:0.778px;left:1055.90px;-webkit-text-stroke:0.2px #ccccdc;">04:00</div>
<div class="t" style="font-size:12px;line-height:18px;top:791.80px;color:#ccccdc;letter-spacing:0.687px;left:1115.46px;-webkit-text-stroke:0.2px #ccccdc;">05:00</div>
<div class="t" style="font-size:12px;line-height:18px;top:791.80px;color:#ccccdc;letter-spacing:0.716px;left:1174.78px;-webkit-text-stroke:0.2px #ccccdc;">06:00</div>
<div class="t" style="font-size:12px;line-height:18px;top:791.80px;color:#ccccdc;letter-spacing:0.458px;left:1234.67px;-webkit-text-stroke:0.2px #ccccdc;">07:00</div>
<div class="t" style="font-size:12px;line-height:18px;top:791.80px;color:#ccccdc;letter-spacing:0.713px;left:1293.53px;-webkit-text-stroke:0.2px #ccccdc;">08:00</div>
<div class="t" style="font-size:12px;line-height:18px;top:791.80px;color:#ccccdc;letter-spacing:0.716px;left:1352.90px;-webkit-text-stroke:0.2px #ccccdc;">09:00</div>
<div class="t" style="font-size:12px;line-height:18px;top:791.80px;color:#ccccdc;letter-spacing:0.204px;left:1413.30px;-webkit-text-stroke:0.2px #ccccdc;">10:00</div>
<div style="position:absolute;left:1502px;top:444px;width:737px;height:372px;box-sizing:border-box;background:#181b1f;border:1px solid #2a2c32;border-radius:2px;"></div>
<div class="t" style="font-size:14px;line-height:21px;top:451.00px;color:#ccccdc;letter-spacing:0.280px;left:1511.00px;-webkit-text-stroke:0.5px #ccccdc;">事件占比</div>
<svg class="a" style="left:0;top:0" width="2251" height="1206" viewBox="0 0 2251 1206"><defs><radialGradient id="gG" gradientUnits="userSpaceOnUse" cx="1798.7" cy="646.0" r="145.2"><stop offset="0" stop-color="#1a4115"/><stop offset="0.35" stop-color="#1a4115"/><stop offset="1" stop-color="#2d5f20"/></radialGradient><radialGradient id="gY" gradientUnits="userSpaceOnUse" cx="1798.7" cy="646.0" r="145.2"><stop offset="0" stop-color="#b89e0a"/><stop offset="0.35" stop-color="#b89e0a"/><stop offset="1" stop-color="#e8b900"/></radialGradient><radialGradient id="gB" gradientUnits="userSpaceOnUse" cx="1798.7" cy="646.0" r="145.2"><stop offset="0" stop-color="#2b4a78"/><stop offset="0.35" stop-color="#2b4a78"/><stop offset="1" stop-color="#3b6d9f"/></radialGradient></defs><path d="M1798.7 646.0L1799.33 500.80A145.2 145.2 0 1 1 1741.03 512.74Z" fill="url(#gG)" stroke="#181b1f" stroke-width="1.2" stroke-linejoin="round"/><path d="M1798.7 646.0L1742.67 512.05A145.2 145.2 0 0 1 1764.56 504.87Z" fill="url(#gY)" stroke="#181b1f" stroke-width="1.2" stroke-linejoin="round"/><path d="M1798.7 646.0L1765.79 504.58A145.2 145.2 0 0 1 1789.84 501.07Z" fill="url(#gB)" stroke="#181b1f" stroke-width="1.2" stroke-linejoin="round"/><path d="M1791.61 500.97L1794.51 550.09" stroke="#8a3fb0" stroke-width="0.9" opacity="0.6"/></svg>
<div style="position:absolute;left:2090px;top:496px;width:14px;height:4px;background:#37872d;border-radius:2px;"></div>
<div class="t" style="font-size:12px;line-height:18px;top:488.80px;color:#ccccdc;letter-spacing:0.430px;left:2112.50px;-webkit-text-stroke:0.2px #ccccdc;">netrecvlat</div>
<div class="t" style="font-size:12px;line-height:18px;top:488.80px;color:#ccccdc;letter-spacing:0.987px;left:2189.01px;-webkit-text-stroke:0.2px #ccccdc;">94%</div>
<div style="position:absolute;left:2090px;top:519px;width:14px;height:4px;background:#fade2a;border-radius:2px;"></div>
<div class="t" style="font-size:12px;line-height:18px;top:511.80px;color:#ccccdc;letter-spacing:0.519px;left:2112.50px;-webkit-text-stroke:0.2px #ccccdc;">oom</div>
<div class="t" style="font-size:12px;line-height:18px;top:511.80px;color:#ccccdc;letter-spacing:0.926px;left:2196.73px;-webkit-text-stroke:0.2px #ccccdc;">3%</div>
<div style="position:absolute;left:2090px;top:542px;width:14px;height:4px;background:#3274a1;border-radius:2px;"></div>
<div class="t" style="font-size:12px;line-height:18px;top:534.80px;color:#ccccdc;letter-spacing:0.483px;left:2112.50px;-webkit-text-stroke:0.2px #ccccdc;">softirq</div>
<div class="t" style="font-size:12px;line-height:18px;top:534.80px;color:#ccccdc;letter-spacing:0.926px;left:2196.73px;-webkit-text-stroke:0.2px #ccccdc;">3%</div>
<div style="position:absolute;left:2090px;top:565px;width:14px;height:4px;background:#b877d9;border-radius:2px;"></div>
<div class="t" style="font-size:12px;line-height:18px;top:557.80px;color:#ccccdc;letter-spacing:0.455px;left:2112.50px;-webkit-text-stroke:0.2px #ccccdc;">iotracer</div>
<div class="t" style="font-size:12px;line-height:18px;top:557.80px;color:#ccccdc;letter-spacing:1.005px;left:2196.65px;-webkit-text-stroke:0.2px #ccccdc;">0%</div>
<div style="position:absolute;left:2090px;top:587px;width:14px;height:4px;background:#73bf69;border-radius:2px;"></div>
<div class="t" style="font-size:12px;line-height:18px;top:579.80px;color:#ccccdc;letter-spacing:0.483px;left:2112.50px;-webkit-text-stroke:0.2px #ccccdc;">cgroupusage</div>
<div class="t" style="font-size:12px;line-height:18px;top:579.80px;color:#ccccdc;letter-spacing:1.005px;left:2196.65px;-webkit-text-stroke:0.2px #ccccdc;">0%</div>
<div style="position:absolute;left:2090px;top:610px;width:14px;height:4px;background:#f2cc0c;border-radius:2px;"></div>
<div class="t" style="font-size:12px;line-height:18px;top:602.80px;color:#ccccdc;letter-spacing:0.561px;left:2112.50px;-webkit-text-stroke:0.2px #ccccdc;">cpusys</div>
<div class="t" style="font-size:12px;line-height:18px;top:602.80px;color:#ccccdc;letter-spacing:1.005px;left:2196.65px;-webkit-text-stroke:0.2px #ccccdc;">0%</div>
<div style="position:absolute;left:2090px;top:633px;width:14px;height:4px;background:#8ab8ff;border-radius:2px;"></div>
<div class="t" style="font-size:12px;line-height:18px;top:625.80px;color:#ccccdc;letter-spacing:0.428px;left:2112.50px;-webkit-text-stroke:0.2px #ccccdc;">directreclaim</div>
<div class="t" style="font-size:12px;line-height:18px;top:625.80px;color:#ccccdc;letter-spacing:1.005px;left:2196.65px;-webkit-text-stroke:0.2px #ccccdc;">0%</div>
<div style="position:absolute;left:2090px;top:656px;width:14px;height:4px;background:#ff780a;border-radius:2px;"></div>
<div class="t" style="font-size:12px;line-height:18px;top:648.80px;color:#ccccdc;letter-spacing:0.418px;left:2112.50px;-webkit-text-stroke:0.2px #ccccdc;">ctnDLoad</div>
<div class="t" style="font-size:12px;line-height:18px;top:648.80px;color:#ccccdc;letter-spacing:1.005px;left:2196.65px;-webkit-text-stroke:0.2px #ccccdc;">0%</div>
<div style="position:absolute;left:2090px;top:679px;width:14px;height:4px;background:#f2495c;border-radius:2px;"></div>
<div class="t" style="font-size:12px;line-height:18px;top:671.80px;color:#ccccdc;letter-spacing:0.550px;left:2112.50px;-webkit-text-stroke:0.2px #ccccdc;">dropwatch</div>
<div class="t" style="font-size:12px;line-height:18px;top:671.80px;color:#ccccdc;letter-spacing:1.005px;left:2196.65px;-webkit-text-stroke:0.2px #ccccdc;">0%</div>
<div style="position:absolute;left:2090px;top:702px;width:14px;height:4px;background:#5794f2;border-radius:2px;"></div>
<div class="t" style="font-size:12px;line-height:18px;top:694.80px;color:#ccccdc;letter-spacing:0.448px;left:2112.50px;-webkit-text-stroke:0.2px #ccccdc;">hungtask</div>
<div class="t" style="font-size:12px;line-height:18px;top:694.80px;color:#ccccdc;letter-spacing:1.005px;left:2196.65px;-webkit-text-stroke:0.2px #ccccdc;">0%</div>
<div style="position:absolute;left:2090px;top:724px;width:14px;height:4px;background:#705da0;border-radius:2px;"></div>
<div class="t" style="font-size:12px;line-height:18px;top:716.80px;color:#ccccdc;letter-spacing:0.487px;left:2112.50px;-webkit-text-stroke:0.2px #ccccdc;">memburst</div>
<div class="t" style="font-size:12px;line-height:18px;top:716.80px;color:#ccccdc;letter-spacing:1.005px;left:2196.65px;-webkit-text-stroke:0.2px #ccccdc;">0%</div>
<div style="position:absolute;left:2090px;top:747px;width:14px;height:4px;background:#c15c17;border-radius:2px;"></div>
<div class="t" style="font-size:12px;line-height:18px;top:739.80px;color:#ccccdc;letter-spacing:0.544px;left:2112.50px;-webkit-text-stroke:0.2px #ccccdc;">softlockup</div>
<div class="t" style="font-size:12px;line-height:18px;top:739.80px;color:#ccccdc;letter-spacing:1.005px;left:2196.65px;-webkit-text-stroke:0.2px #ccccdc;">0%</div>
<div style="position:absolute;left:2090px;top:770px;width:14px;height:4px;background:#890f02;border-radius:2px;"></div>
<div class="t" style="font-size:12px;line-height:18px;top:762.80px;color:#ccccdc;letter-spacing:0.402px;left:2112.50px;-webkit-text-stroke:0.2px #ccccdc;">waitrateitle</div>
<div class="t" style="font-size:12px;line-height:18px;top:762.80px;color:#ccccdc;letter-spacing:1.005px;left:2196.65px;-webkit-text-stroke:0.2px #ccccdc;">0%</div>
<svg class="a" style="left:19px;top:833.2px" width="12" height="12" viewBox="0 0 12 12"><path d="M2.8 4.4L6 7.6L9.2 4.4" stroke="#c7c8d8" stroke-width="1.5" fill="none" stroke-linecap="round" stroke-linejoin="round"/></svg>
<div class="t" style="font-size:16px;line-height:24px;top:826.60px;color:#ccccdc;letter-spacing:0.756px;left:41.60px;-webkit-text-stroke:0.55px #ccccdc;">cpuidle</div>
<div class="t" style="font-size:14px;line-height:21px;top:868.90px;color:#ccccdc;letter-spacing:0.621px;left:20.30px;-webkit-text-stroke:0.5px #ccccdc;">cpuidle阈值说明</div>
<div class="t" style="font-size:14px;line-height:21px;top:903.50px;color:#ccccdc;letter-spacing:0.029px;left:20.30px;-webkit-text-stroke:0.2px #ccccdc;">触发条件:</div>
<div class="t" style="font-size:14px;line-height:21px;top:942.00px;color:#ccccdc;letter-spacing:0.358px;left:20.30px;-webkit-text-stroke:0.2px #ccccdc;">1、sys &gt; 45%</div>
<div class="t" style="font-size:14px;line-height:21px;top:963.90px;color:#ccccdc;letter-spacing:0.401px;left:20.30px;-webkit-text-stroke:0.2px #ccccdc;">2、user &gt; 75% &amp;&amp; user 单位时间(10s)波动 &gt; 30%</div>
<div class="t" style="font-size:14px;line-height:21px;top:985.90px;color:#ccccdc;letter-spacing:0.412px;left:20.30px;-webkit-text-stroke:0.2px #ccccdc;">3、usage &gt; 90% &amp;&amp; usage单位时间(10s)波动 &gt;</div>
<div class="t" style="font-size:14px;line-height:21px;top:1007.80px;color:#ccccdc;letter-spacing:0.660px;left:20.30px;-webkit-text-stroke:0.2px #ccccdc;">30%</div>
<div class="t" style="font-size:14px;line-height:21px;top:1029.80px;color:#ccccdc;letter-spacing:0.000px;left:20.30px;-webkit-text-stroke:0.2px #ccccdc;">以上条件符合其中一</div>
<div style="position:absolute;left:384px;top:862px;width:365px;height:334px;box-sizing:border-box;background:#181b1f;border:1px solid #2a2c32;border-radius:2px;"></div>
<div class="t" style="font-size:14px;line-height:21px;top:868.80px;color:#ccccdc;letter-spacing:0.815px;left:393.30px;-webkit-text-stroke:0.5px #ccccdc;">cpuidle</div>
<div class="t" style="left:453.49px;top:925.56px;font-size:237.96px;line-height:237.96px;width:132.35px;color:#73bf69;-webkit-text-stroke:5px #73bf69;transform:scaleX(0.9905);transform-origin:0 0;">2</div>
<div class="t" style="left:577.58px;top:925.56px;font-size:237.96px;line-height:237.96px;width:132.35px;color:#73bf69;-webkit-text-stroke:5px #73bf69;transform:scaleX(1.0824);transform-origin:0 0;clip-path:polygon(-20px -20px,152.3px -20px,152.3px 178.36px,82.82px 178.36px,82.82px 205.94px,57.58px 205.94px,57.58px 178.36px,-20px 178.36px);">1</div>
<div style="position:absolute;left:756px;top:862px;width:1483px;height:334px;box-sizing:border-box;background:#181b1f;border:1px solid #2a2c32;border-radius:2px;"></div>
<div class="t" style="font-size:14px;line-height:21px;top:868.80px;color:#ccccdc;letter-spacing:0.815px;left:765.30px;-webkit-text-stroke:0.5px #ccccdc;">cpuidle</div>
<svg class="a" style="left:0;top:0" width="2251" height="1206" viewBox="0 0 2251 1206"><path d="M803.5 912V1171M863.5 912V1171M923.5 912V1171M982.5 912V1171M1042.5 912V1171M1101.5 912V1171M1161.5 912V1171M1220.5 912V1171M1280.5 912V1171M1340.5 912V1171M1399.5 912V1171M1459.5 912V1171M1518.5 912V1171M1578.5 912V1171M1638.5 912V1171M1697.5 912V1171M1757.5 912V1171M1816.5 912V1171M1876.5 912V1171M1935.5 912V1171M1995.5 912V1171M2055.5 912V1171M2114.5 912V1171M2174.5 912V1171M792.2 1166.5H2222.6M792.2 1108.5H2222.6M792.2 1050.5H2222.6M792.2 992.5H2222.6M792.2 934.5H2222.6" stroke="#2c2f34" stroke-width="1" fill="none" shape-rendering="crispEdges"/><path d="M792.7 1166.5L799.5 1166.5L800.20 1096.8L800.5 1050.3L800.80 1096.8L801.5 1166.5L813.5 1166.5L814.20 1096.8L814.5 1050.3L814.80 1096.8L815.5 1166.5L836.5 1166.5L837.20 1027.1L837.5 934.1L837.80 1027.1L838.5 1166.5L840.5 1166.5L841.20 1096.8L841.5 1050.3L841.80 1096.8L842.5 1166.5L922.5 1166.5L923.20 1096.8L923.5 1050.3L923.80 1096.8L924.5 1166.5L1013.5 1166.5L1014.20 1096.8L1014.5 1050.3L1014.80 1096.8L1015.5 1166.5L1025.5 1166.5L1026.20 1096.8L1026.5 1050.3L1026.80 1096.8L1027.5 1166.5L1064.5 1166.5L1065.20 1096.8L1065.5 1050.3L1065.80 1096.8L1066.5 1166.5L1066.5 1166.5L1067.20 1096.8L1067.5 1050.3L1067.80 1096.8L1068.5 1166.5L1112.5 1166.5L1113.20 1096.8L1113.5 1050.3L1113.80 1096.8L1114.5 1166.5L1124.5 1166.5L1125.20 1096.8L1125.5 1050.3L1125.80 1096.8L1126.5 1166.5L1177.5 1166.5L1178.20 1096.8L1178.5 1050.3L1178.80 1096.8L1179.5 1166.5L1215.5 1166.5L1216.20 1096.8L1216.5 1050.3L1216.80 1096.8L1217.5 1166.5L1274.5 1166.5L1275.20 1096.8L1275.5 1050.3L1275.80 1096.8L1276.5 1166.5L1280.5 1166.5L1281.20 1096.8L1281.5 1050.3L1281.80 1096.8L1282.5 1166.5L1313.5 1166.5L1314.20 1096.8L1314.5 1050.3L1314.80 1096.8L1315.5 1166.5L1492.5 1166.5L1493.20 1096.8L1493.5 1050.3L1493.80 1096.8L1494.5 1166.5L1639.5 1166.5L1640.20 1096.8L1640.5 1050.3L1640.80 1096.8L1641.5 1166.5L1696.5 1166.5L1697.20 1096.8L1697.5 1050.3L1697.80 1096.8L1698.5 1166.5L2183.5 1166.5L2184.20 1096.8L2184.5 1050.3L2184.80 1096.8L2185.5 1166.5L2221.6 1166.5" stroke="#73bf69" stroke-width="1.15" fill="none" stroke-linejoin="miter"/></svg>
<div class="t" style="font-size:12px;line-height:18px;top:1157.20px;color:#ccccdc;letter-spacing:0.896px;left:779.63px;-webkit-text-stroke:0.2px #ccccdc;">0</div>
<div class="t" style="font-size:12px;line-height:18px;top:1099.10px;color:#ccccdc;letter-spacing:0.389px;left:768.84px;-webkit-text-stroke:0.2px #ccccdc;">0.5</div>
<div class="t" style="font-size:12px;line-height:18px;top:1041.00px;color:#ccccdc;letter-spacing:-1.793px;left:779.63px;-webkit-text-stroke:0.2px #ccccdc;">1</div>
<div class="t" style="font-size:12px;line-height:18px;top:982.90px;color:#ccccdc;letter-spacing:-0.406px;left:770.43px;-webkit-text-stroke:0.2px #ccccdc;">1.5</div>
<div class="t" style="font-size:12px;line-height:18px;top:924.80px;color:#ccccdc;letter-spacing:0.644px;left:779.63px;-webkit-text-stroke:0.2px #ccccdc;">2</div>
<div class="t" style="font-size:12px;line-height:18px;top:1171.80px;color:#ccccdc;letter-spacing:-0.156px;left:788.94px;-webkit-text-stroke:0.2px #ccccdc;">11:00</div>
<div class="t" style="font-size:12px;line-height:18px;top:1171.80px;color:#ccccdc;letter-spacing:0.153px;left:847.46px;-webkit-text-stroke:0.2px #ccccdc;">12:00</div>
<div class="t" style="font-size:12px;line-height:18px;top:1171.80px;color:#ccccdc;letter-spacing:0.172px;left:907.00px;-webkit-text-stroke:0.2px #ccccdc;">13:00</div>
<div class="t" style="font-size:12px;line-height:18px;top:1171.80px;color:#ccccdc;letter-spacing:0.240px;left:966.44px;-webkit-text-stroke:0.2px #ccccdc;">14:00</div>
<div class="t" style="font-size:12px;line-height:18px;top:1171.80px;color:#ccccdc;letter-spacing:0.149px;left:1026.20px;-webkit-text-stroke:0.2px #ccccdc;">15:00</div>
<div class="t" style="font-size:12px;line-height:18px;top:1171.80px;color:#ccccdc;letter-spacing:0.178px;left:1085.72px;-webkit-text-stroke:0.2px #ccccdc;">16:00</div>
<div class="t" style="font-size:12px;line-height:18px;top:1171.80px;color:#ccccdc;letter-spacing:-0.033px;left:1145.73px;-webkit-text-stroke:0.2px #ccccdc;">17:00</div>
<div class="t" style="font-size:12px;line-height:18px;top:1171.80px;color:#ccccdc;letter-spacing:0.175px;left:1204.89px;-webkit-text-stroke:0.2px #ccccdc;">18:00</div>
<div class="t" style="font-size:12px;line-height:18px;top:1171.80px;color:#ccccdc;letter-spacing:0.178px;left:1264.46px;-webkit-text-stroke:0.2px #ccccdc;">19:00</div>
<div class="t" style="font-size:12px;line-height:18px;top:1171.80px;color:#ccccdc;letter-spacing:0.691px;left:1323.01px;-webkit-text-stroke:0.2px #ccccdc;">20:00</div>
<div class="t" style="font-size:12px;line-height:18px;top:1171.80px;color:#ccccdc;letter-spacing:0.153px;left:1383.67px;-webkit-text-stroke:0.2px #ccccdc;">21:00</div>
<div class="t" style="font-size:12px;line-height:18px;top:1171.80px;color:#ccccdc;letter-spacing:0.641px;left:1442.27px;-webkit-text-stroke:0.2px #ccccdc;">22:00</div>
<div class="t" style="font-size:12px;line-height:18px;top:1171.80px;color:#ccccdc;letter-spacing:0.660px;left:1501.82px;-webkit-text-stroke:0.2px #ccccdc;">23:00</div>
<div class="t" style="font-size:12px;line-height:18px;top:1171.80px;color:#ccccdc;letter-spacing:0.742px;left:1561.23px;-webkit-text-stroke:0.2px #ccccdc;">00:00</div>
<div class="t" style="font-size:12px;line-height:18px;top:1171.80px;color:#ccccdc;letter-spacing:0.204px;left:1621.89px;-webkit-text-stroke:0.2px #ccccdc;">01:00</div>
<div class="t" style="font-size:12px;line-height:18px;top:1171.80px;color:#ccccdc;letter-spacing:0.691px;left:1680.49px;-webkit-text-stroke:0.2px #ccccdc;">02:00</div>
<div class="t" style="font-size:12px;line-height:18px;top:1171.80px;color:#ccccdc;letter-spacing:0.710px;left:1740.03px;-webkit-text-stroke:0.2px #ccccdc;">03:00</div>
<div class="t" style="font-size:12px;line-height:18px;top:1171.80px;color:#ccccdc;letter-spacing:0.778px;left:1799.47px;-webkit-text-stroke:0.2px #ccccdc;">04:00</div>
<div class="t" style="font-size:12px;line-height:18px;top:1171.80px;color:#ccccdc;letter-spacing:0.687px;left:1859.24px;-webkit-text-stroke:0.2px #ccccdc;">05:00</div>
<div class="t" style="font-size:12px;line-height:18px;top:1171.80px;color:#ccccdc;letter-spacing:0.716px;left:1918.76px;-webkit-text-stroke:0.2px #ccccdc;">06:00</div>
<div class="t" style="font-size:12px;line-height:18px;top:1171.80px;color:#ccccdc;letter-spacing:0.458px;left:1978.85px;-webkit-text-stroke:0.2px #ccccdc;">07:00</div>
<div class="t" style="font-size:12px;line-height:18px;top:1171.80px;color:#ccccdc;letter-spacing:0.713px;left:2037.92px;-webkit-text-stroke:0.2px #ccccdc;">08:00</div>
<div class="t" style="font-size:12px;line-height:18px;top:1171.80px;color:#ccccdc;letter-spacing:0.716px;left:2097.49px;-webkit-text-stroke:0.2px #ccccdc;">09:00</div>
<div class="t" style="font-size:12px;line-height:18px;top:1171.80px;color:#ccccdc;letter-spacing:0.204px;left:2158.10px;-webkit-text-stroke:0.2px #ccccdc;">10:00</div>
<div style="position:absolute;left:12px;top:1204px;width:2227px;height:2px;background:#2a2c32;border-radius:3px 3px 0 0;"></div>
<div style="position:absolute;left:12px;top:1204px;width:31px;height:2px;background:#d81b6a;"></div>
<svg class="a" style="left:0;top:0;z-index:10" width="2251" height="1206" viewBox="0 0 2251 1206"><rect x="12" y="821" width="126" height="42" rx="3" ry="3" fill="none" stroke="#f94d22" stroke-width="4"/><path d="M586.5 232.4L143.6 814.4" stroke="#f94d22" stroke-width="2.4" fill="none" stroke-linecap="round"/><path d="M140.7 800.4L143.6 814.6L158.3 813.2" stroke="#f94d22" stroke-width="2.4" fill="none" stroke-linecap="round" stroke-linejoin="round"/></svg>
</body></html>
